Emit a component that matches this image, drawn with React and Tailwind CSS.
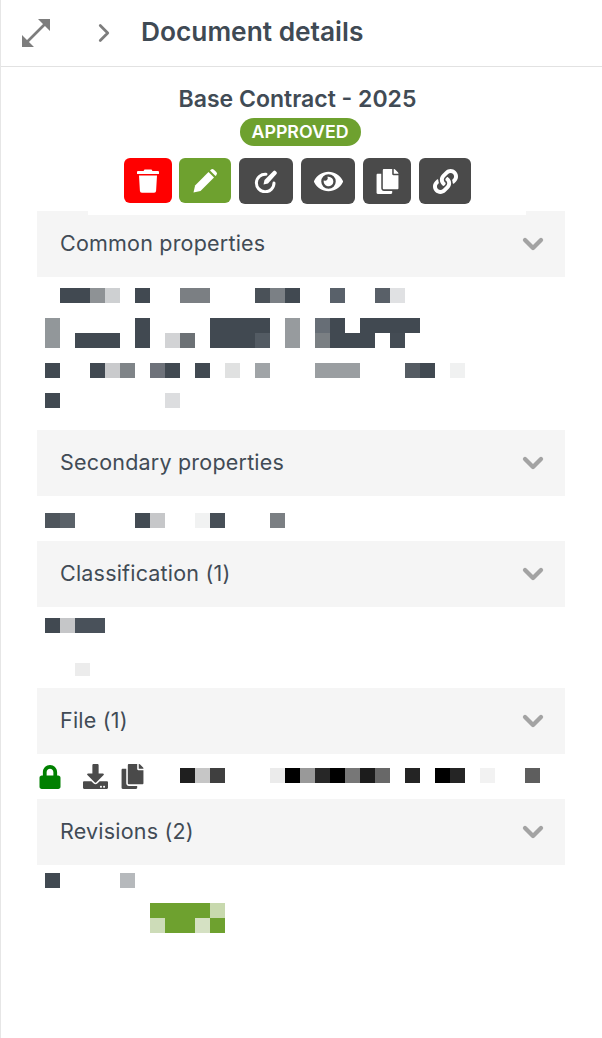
import React from 'react';
import { ChevronDown, ChevronRight } from 'lucide-react';
import { FaCopy, FaDownload, FaEye, FaLink, FaLock } from 'react-icons/fa';

const DARK = 'bg-[#414951]';

// each row: [offset from x=45, width, colour]
const Mosaic = ({ cells, height = 'h-[15px]' }) => {
  let cursor = 0;
  return (
    <div className={`flex ${height}`}>
      {cells.map(([from, width, color]) => {
        const gap = from - cursor;
        cursor = from + width;
        return <div key={from} className={color} style={{ marginLeft: gap, width }} />;
      })}
    </div>
  );
};

const Section = ({ title }) => (
  <div className="flex h-[66px] items-center justify-between bg-[#f5f5f5] pl-[23px] pr-[16px]">
    <span className="-mt-0.5 text-[21.5px] tracking-[0.2px] text-[#414b55]">{title}</span>
    <ChevronDown size={32} strokeWidth={3.2} className="text-[#a3a3a3]" />
  </div>
);

const ExpandIcon = () => (
  <svg width="28" height="28" viewBox="0 0 28 28" className="ml-[21px] text-[#7d7d7d]">
    <path d="M16 0h12v12z M0 28v-12l12 12z" fill="currentColor" />
    <path d="M5 23L23 5" stroke="currentColor" strokeWidth="2.6" />
  </svg>
);

const TrashIcon = () => (
  <svg width="22" height="24" viewBox="0 0 22 24" fill="white">
    <path d="M7.5 0.5h7l1 1.5H21a1 1 0 0 1 1 1v1.5a.5.5 0 0 1-.5.5H.5a.5.5 0 0 1-.5-.5V3a1 1 0 0 1 1-1h5.5z" />
    <path d="M2 6.5h18l-.9 15.3a2 2 0 0 1-2 1.9H4.9a2 2 0 0 1-2-1.9z" />
  </svg>
);

const PencilIcon = () => (
  <svg width="25" height="25" viewBox="0 0 25 25" fill="white">
    <path d="M0.5 24.5l1.6-7L15.5 4l5.5 5.5L7.5 23z" />
    <path d="M17 2.5l.8-.8a2.2 2.2 0 0 1 3.1 0l2.4 2.4a2.2 2.2 0 0 1 0 3.1l-.8.8z" />
  </svg>
);

const SignIcon = () => (
  <svg width="24" height="24" viewBox="0 0 24 24" fill="none">
    <path d="M12 5.2A8.8 8.8 0 1 0 20 14" stroke="white" strokeWidth="3" strokeLinecap="round" />
    <path d="M9.5 15.5l1-4.5L19.5 2a1.5 1.5 0 0 1 2 0l1 1a1.5 1.5 0 0 1 0 2L14 14.5z" fill="white" />
  </svg>
);

const ActionButton = ({ color, width, tall, children }) => (
  <button className={`flex items-center justify-center rounded-[6px] text-white ${color} ${width} ${tall ? 'h-[46px]' : 'h-[45px]'}`}>
    {children}
  </button>
);

const App = () => (
  <div className="h-[1038px] w-[602px] border-l border-[#e6e6e6] bg-white font-['Inter',sans-serif]">
    <div className="flex h-[67px] items-center border-b border-[#e2e2e2]">
      <ExpandIcon />
      <ChevronRight size={30} strokeWidth={2.2} className="ml-[39px] text-[#7d7d7d]" />
      <h1 className="ml-[22px] -mt-[3px] text-[26.3px] font-semibold text-[#3f4a54]">Document details</h1>
    </div>

    <div className="flex flex-col items-center pt-[17px]">
      <h2 className="mr-2 text-[23px] leading-[30px] font-semibold text-[#414b55]">Base Contract - 2025</h2>
      <span className="mt-1 mr-[3px] flex h-[28px] w-[121px] items-center justify-center rounded-full bg-[#6ea12f] text-[17.8px] font-semibold text-white">
        APPROVED
      </span>
      <div className="relative z-10 -mb-1 mt-[12px] ml-[11px] flex h-[57px] w-[438px] items-start gap-2 bg-white pl-9">
        <ActionButton color="bg-[#ff0000] -mr-px" width="w-12"><TrashIcon /></ActionButton>
        <ActionButton color="bg-[#6ea12f]" width="w-[52px]"><PencilIcon /></ActionButton>
        <ActionButton color="bg-[#4a4a4a]" width="w-[54px]" tall><SignIcon /></ActionButton>
        <ActionButton color="bg-[#4a4a4a]" width="w-[54px]" tall><FaEye size={29} /></ActionButton>
        <ActionButton color="bg-[#4a4a4a]" width="w-12" tall><FaCopy size={25} /></ActionButton>
        <ActionButton color="bg-[#4a4a4a]" width="w-[52px]" tall><FaLink size={25} /></ActionButton>
      </div>
    </div>

    <div className="ml-9 w-[528px]">
      <Section title="Common properties" />
      <div className="flex flex-col pl-2 pt-[11px] pb-[22px]">
        <Mosaic cells={[[15, 30, DARK], [45, 15, 'bg-[#8e9295]'], [60, 15, 'bg-[#ced0d2]'], [90, 15, DARK], [135, 30, 'bg-[#7b7f83]'], [210, 15, 'bg-[#4a5158]'], [225, 15, 'bg-[#7b8085]'], [240, 15, DARK], [285, 15, 'bg-[#59616a]'], [330, 15, 'bg-[#596068]'], [345, 15, 'bg-[#e0e1e3]']]} />
        <div className="mt-[15px]">
          <Mosaic cells={[[0, 15, 'bg-[#92979a]'], [90, 15, DARK], [165, 60, DARK], [240, 15, 'bg-[#979b9e]'], [270, 15, 'bg-[#676e76]'], [285, 15, DARK], [315, 60, DARK]]} />
          <Mosaic cells={[[0, 15, 'bg-[#92979a]'], [30, 45, DARK], [90, 15, DARK], [120, 15, 'bg-[#d2d3d5]'], [135, 15, 'bg-[#6c7175]'], [165, 45, DARK], [210, 15, 'bg-[#535b63]'], [240, 15, 'bg-[#979b9e]'], [270, 15, 'bg-[#7a7f83]'], [285, 45, DARK], [345, 15, 'bg-[#444c54]']]} />
        </div>
        <div className="mt-[15px]">
          <Mosaic cells={[[0, 15, DARK], [45, 15, DARK], [60, 15, 'bg-[#c9cacc]'], [75, 15, 'bg-[#7f8488]'], [105, 15, 'bg-[#6e727a]'], [120, 15, DARK], [150, 15, DARK], [180, 15, 'bg-[#e0e1e1]'], [210, 15, 'bg-[#a0a4a7]'], [270, 45, 'bg-[#9a9ea1]'], [360, 15, 'bg-[#555c63]'], [375, 15, DARK], [405, 15, 'bg-[#f0f1f1]']]} />
        </div>
        <div className="mt-[15px]">
          <Mosaic cells={[[0, 15, DARK], [120, 15, 'bg-[#dcdddf]']]} />
        </div>
      </div>

      <Section title="Secondary properties" />
      <div className="pl-2 pt-[17px] pb-[13px]">
        <Mosaic cells={[[0, 15, 'bg-[#4e555c]'], [15, 15, 'bg-[#5b6269]'], [90, 15, 'bg-[#434b53]'], [105, 15, 'bg-[#c6c7c9]'], [150, 15, 'bg-[#f1f2f2]'], [165, 15, 'bg-[#474f57]'], [225, 15, 'bg-[#7b7f83]']]} />
      </div>

      <Section title="Classification (1)" />
      <div className="pl-2 pt-[11px] pb-3">
        <Mosaic cells={[[0, 15, DARK], [15, 15, 'bg-[#c5c6c8]'], [30, 30, 'bg-[#49515a]']]} />
        <div className="mt-[30px]">
          <Mosaic height="h-[13px]" cells={[[30, 15, 'bg-[#ececec]']]} />
        </div>
      </div>

      <Section title="File (1)" />
      <div className="flex h-[45px] items-center">
        <FaLock size={24} className="ml-[1px] text-[#008000]" />
        <FaDownload size={25} className="ml-[21px] text-[#4a4a4a]" />
        <FaCopy size={25} className="ml-3 text-[#4a4a4a]" />
        <div className="ml-[35px] -mt-0.5">
          <Mosaic cells={[[0, 15, 'bg-[#1f1f1f]'], [15, 15, 'bg-[#c6c6c6]'], [30, 15, 'bg-[#3f3f3f]'], [90, 15, 'bg-[#ebebeb]'], [105, 15, 'bg-black'], [120, 15, 'bg-[#999999]'], [135, 15, 'bg-[#272727]'], [150, 15, 'bg-black'], [165, 15, 'bg-[#777777]'], [180, 15, 'bg-[#1c1c1c]'], [195, 15, 'bg-[#686868]'], [225, 15, 'bg-[#242424]'], [255, 15, 'bg-black'], [270, 15, 'bg-[#252525]'], [300, 15, 'bg-[#f2f2f2]'], [345, 15, 'bg-[#5e5e5e]']]} />
        </div>
      </div>

      <Section title="Revisions (2)" />
      <div className="pl-2 pt-2">
        <Mosaic cells={[[0, 15, DARK], [75, 15, 'bg-[#b6b9bc]']]} />
        <div className="mt-[15px]">
          <Mosaic cells={[[105, 60, 'bg-[#6ea12f]'], [165, 15, 'bg-[#c8d9ae]']]} />
          <Mosaic cells={[[105, 15, 'bg-[#cddcb8]'], [120, 30, 'bg-[#6ea12f]'], [150, 15, 'bg-[#d5e1c3]'], [165, 15, 'bg-[#6ea12f]']]} />
        </div>
      </div>
    </div>
  </div>
);

export default App;
